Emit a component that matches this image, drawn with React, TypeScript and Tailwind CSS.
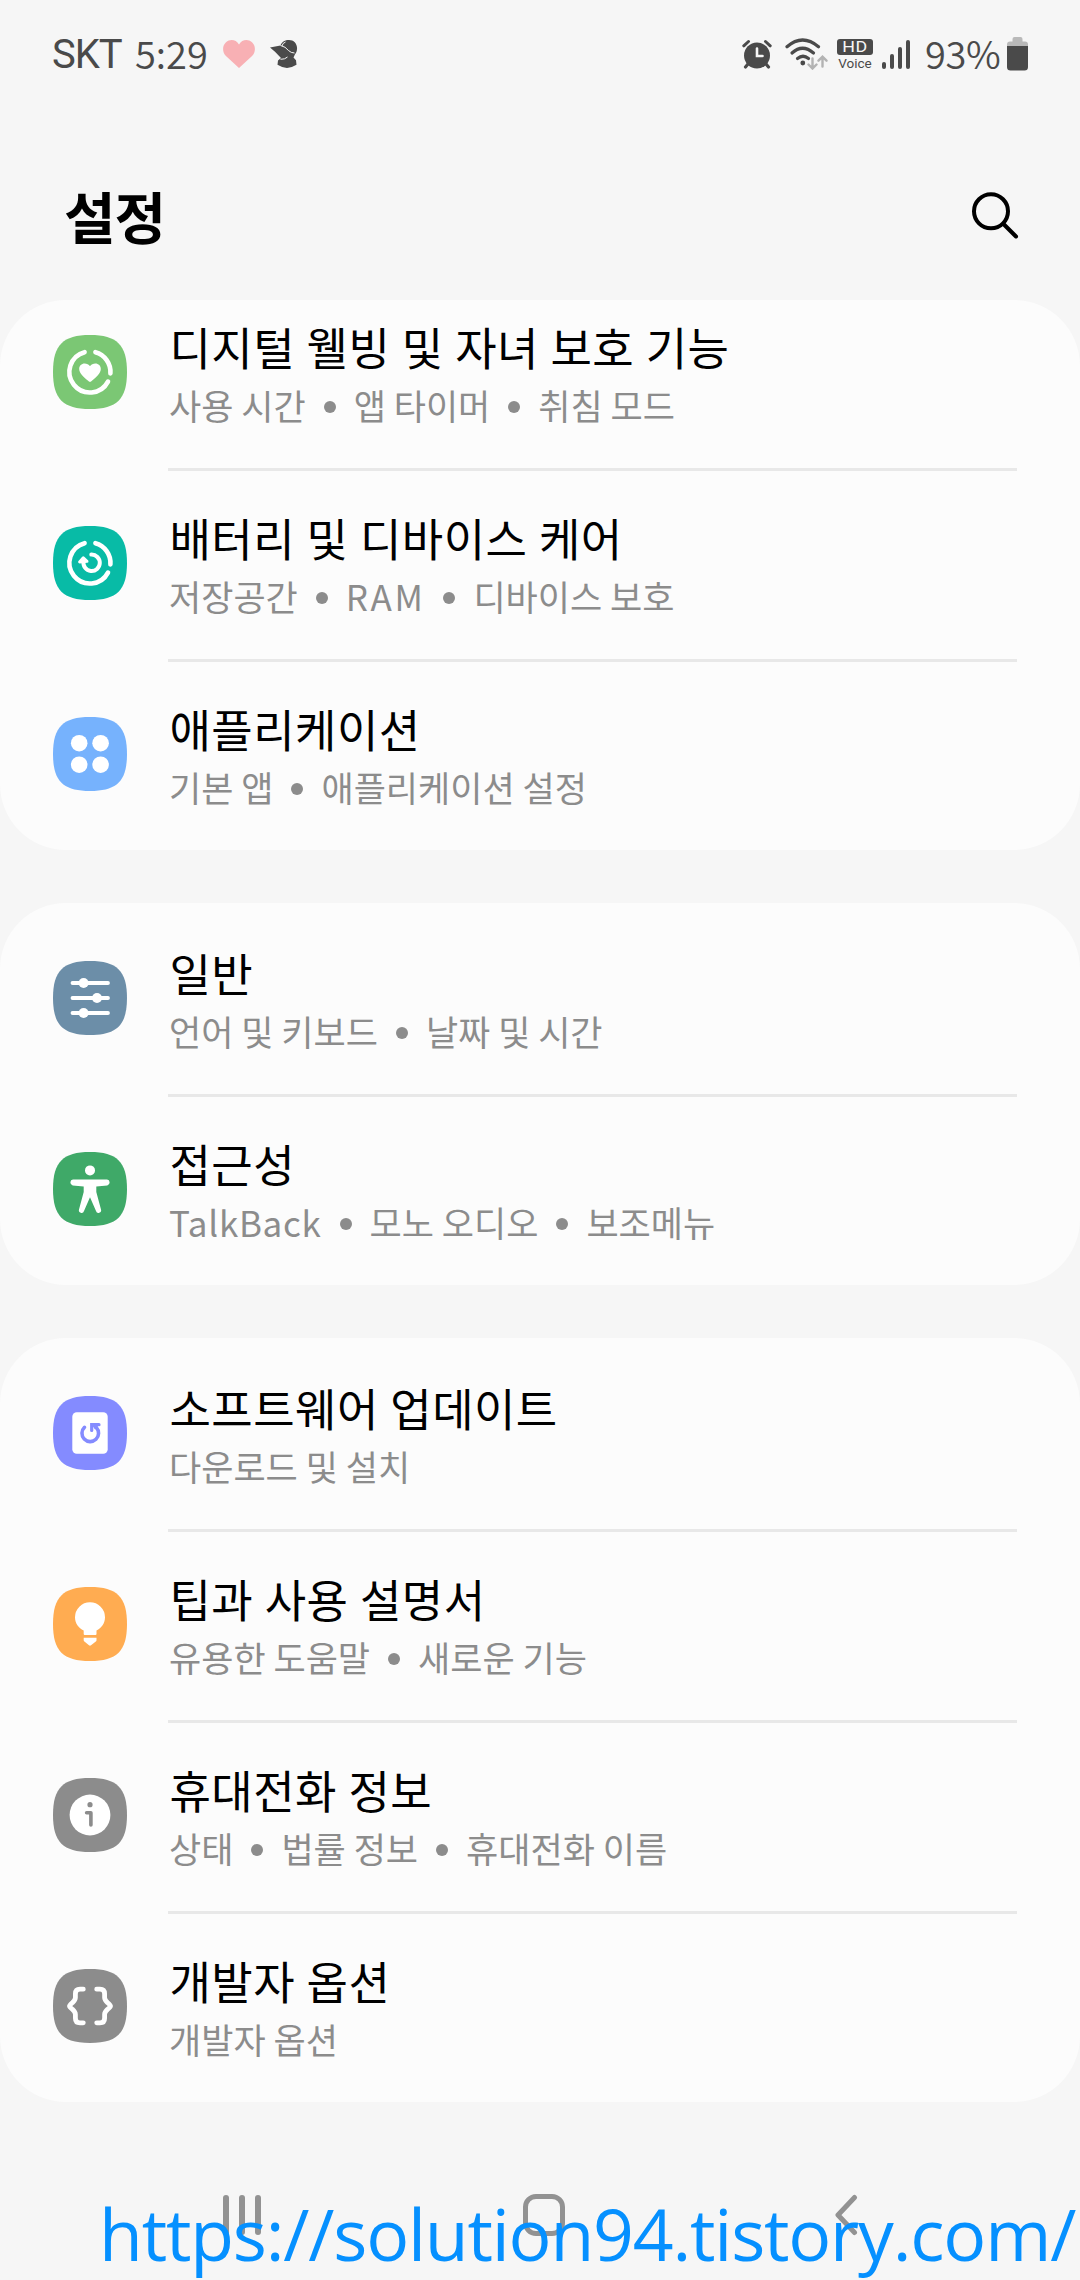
import type { ReactNode } from "react";

interface SettingItem {
  title: string;
  details: string[];
  color: string;
  icon: ReactNode;
}

const ringArcs = (
  <g fill="none" stroke="#fff" strokeWidth="4.6" strokeLinecap="round">
    <path d="M31.6 17.2A20.5 20.5 0 1 0 55 46.6" />
    <path d="M42.4 17.2A20.5 20.5 0 0 1 57.4 38.4" />
  </g>
);

const groups: SettingItem[][] = [
  [
    {
      title: "디지털 웰빙 및 자녀 보호 기능",
      details: ["사용 시간", "앱 타이머", "취침 모드"],
      color: "#7bc774",
      icon: (
        <>
          {ringArcs}
          <path d="M37 46.800c-.6 0-1-.4-1.600-.9-5-4.400-9.200-7.600-9.200-12 0-3.200 2.400-5.500 5.400-5.500 2.200 0 4.200 1 5.400 2.800 1.200-1.800 3.200-2.800 5.400-2.800 3 0 5.400 2.300 5.400 5.500 0 4.400-4.200 7.600-9.200 12-.6.500-1 .9-1.600.9Z" fill="#fff" />
        </>
      ),
    },
    {
      title: "배터리 및 디바이스 케어",
      details: ["저장공간", "RAM", "디바이스 보호"],
      color: "#08bba6",
      icon: (
        <>
          {ringArcs}
          <path d="M38.300 28.600A8.200 8.200 0 1 1 30.500 35.500" fill="none" stroke="#fff" strokeWidth="4" strokeLinecap="round" />
          <path d="M30.300 31.800 26.600 35.900 34 35.300Z" fill="#fff" stroke="#fff" strokeWidth="3" strokeLinejoin="round" />
        </>
      ),
    },
    {
      title: "애플리케이션",
      details: ["기본 앱", "애플리케이션 설정"],
      color: "#76b2fd",
      icon: (
        <g fill="#fff">
          <circle cx="26.200" cy="26.200" r="8.300" />
          <circle cx="47.600" cy="26.200" r="8.300" />
          <circle cx="26.200" cy="47.700" r="8.300" />
          <circle cx="47.600" cy="47.700" r="8.300" />
        </g>
      ),
    },
  ],
  [
    {
      title: "일반",
      details: ["언어 및 키보드", "날짜 및 시간"],
      color: "#6c8ea8",
      icon: (
        <>
          <path d="M19.500 22H55M19.500 37H55M19.500 52H55" stroke="#fff" strokeWidth="3.800" strokeLinecap="round" />
          <g fill="#fff">
            <circle cx="30.600" cy="22" r="5" />
            <circle cx="44" cy="37" r="5" />
            <circle cx="30.600" cy="52" r="5" />
          </g>
        </>
      ),
    },
    {
      title: "접근성",
      details: ["TalkBack", "모노 오디오", "보조메뉴"],
      color: "#3fa968",
      icon: (
        <g fill="#fff">
          <circle cx="37" cy="18.400" r="5" />
          <path d="M20 27.500H54a3 3 0 0 1 .3 5.900L43.300 34.600V40l4.700 17.600a2.600 2.600 0 0 1-5 1.500L37 45.200 31 59.100a2.600 2.600 0 0 1-5-1.500L30.700 40V34.600L19.700 33.400a3 3 0 0 1 .3-5.900Z" />
        </g>
      ),
    },
  ],
  [
    {
      title: "소프트웨어 업데이트",
      details: ["다운로드 및 설치"],
      color: "#848bff",
      icon: (
        <>
          <rect x="19.300" y="16.300" width="35.400" height="41.400" rx="4.500" fill="#fff" />
          <path d="M31.500 31.300A8.300 8.300 0 1 0 43.300 31.600" fill="none" stroke="#848bff" strokeWidth="3.600" strokeLinecap="round" />
          <path d="M38.700 34.500V28.700H46" fill="none" stroke="#848bff" strokeWidth="3.200" strokeLinecap="round" />
          <path d="M38.700 28.700H46L42 33.500Z" fill="#848bff" />
        </>
      ),
    },
    {
      title: "팁과 사용 설명서",
      details: ["유용한 도움말", "새로운 기능"],
      color: "#ffac51",
      icon: (
        <g fill="#fff">
          <path d="M37 15.300a15 15 0 0 0-15 15c0 6 3.500 10.700 8.700 13.300V47q0 1 1 1H42.500q1 0 1-1V43.600C48.500 41 52 36.300 52 30.300a15 15 0 0 0-15-15Z" />
          <path d="M30.700 50.700H43.500v2.600q0 .8-.7 1.300L38 58.300q-1 .8-2 0L31.400 54.600q-.7-.5-.7-1.300Z" />
        </g>
      ),
    },
    {
      title: "휴대전화 정보",
      details: ["상태", "법률 정보", "휴대전화 이름"],
      color: "#8c8c8c",
      icon: (
        <>
          <circle cx="37" cy="37" r="20.400" fill="#fff" />
          <circle cx="37" cy="26.700" r="2.600" fill="#8c8c8c" />
          <path d="M33.600 34.800H37.900V47" fill="none" stroke="#8c8c8c" strokeWidth="3.600" strokeLinecap="round" strokeLinejoin="round" />
        </>
      ),
    },
    {
      title: "개발자 옵션",
      details: ["개발자 옵션"],
      color: "#8c8c8c",
      icon: (
        <g fill="none" stroke="#fff" strokeWidth="4.800" strokeLinecap="round" strokeLinejoin="round">
          <path d="M30.300 20.200H27Q22.400 20.200 22.400 24.800V28.500Q22.400 31 19.500 33.600 16.500 36 16.500 37T19.500 40.400Q22.400 43 22.400 45.500V49.200Q22.400 53.800 27 53.800H30.300" />
          <path d="M43.700 20.200H47Q51.600 20.200 51.600 24.800V28.500Q51.600 31 54.500 33.600 57.500 36 57.500 37T54.500 40.400Q51.600 43 51.600 45.500V49.200Q51.600 53.800 47 53.800H43.700" />
        </g>
      ),
    },
  ],
];

// Latin words are set a little wider than the Hangul around them
const latinTracking: Record<string, string> = {
  RAM: "tracking-[2.6px]",
  TalkBack: "tracking-[.7px]",
};

function StatusBar() {
  return (
    <div className="flex h-[108px] items-start justify-between pl-[52px] pr-[52px] pt-[37px] text-[#4a4a4a]">
      <div className="flex h-[34px] items-center">
        <span className="mt-[2px] w-[83px] font-['Roboto',sans-serif] text-[40px] leading-[34px] tracking-[-1px]">SKT</span>
        <span className="-mt-[3px] w-[88px] text-[38px] leading-[34px] font-[350]">5:29</span>
        <svg className="h-[28px] w-[32px]" viewBox="0 0 32 28" fill="#f8b0b4">
          <path d="M16 28 3.200 16.300C-1 12.300-.8 5.500 3 2.200 7-1.200 13-.6 16 4.400 19-.6 25-1.200 29 2.200c3.800 3.300 4 10.100-.2 14.100Z" />
        </svg>
        <svg className="ml-[15px] h-[28px] w-[28px]" viewBox="0 0 28 28">
          <path d="M0 7.500 10.500 5.500C12 1.500 15 0 19 0c5 0 8.500 4 8 9-.2 2-.5 3.500-2 5.300L23.500 17.500l2.500 2.800.5 4.500Q17 31 7.500 24.800L8 20.500 11 18 5 11.700Z" fill="#4a4a4a" />
          <path d="M10.500 5.500Q15.500 6.500 18.500 10.500 21 13 24.500 13M17.500 17Q15 19.500 10.500 19.300M12 6Q12.500 3 15.500 2" fill="none" stroke="#f6f6f6" strokeWidth="1" />
        </svg>
      </div>

      <div className="flex h-[34px] items-center">
        <svg className="h-[30px] w-[30px]" viewBox="0 0 30 30" fill="none" stroke="#4a4a4a" strokeLinecap="round">
          <circle cx="15" cy="16.500" r="13" fill="#4a4a4a" stroke="none" />
          <path d="M1.800 6.800 6.500 2.500M28.200 6.800 23.500 2.500" strokeWidth="3" />
          <path d="M6 25 3.500 28M24 25 26.500 28" strokeWidth="3.200" />
          <path d="M15 9.500V17H20.500" stroke="#f6f6f6" strokeWidth="2.600" />
        </svg>
        <svg className="ml-[13px] h-[32px] w-[43px]" viewBox="0 0 43 32" fill="none" strokeLinecap="round">
          <g stroke="#4a4a4a" strokeWidth="3.200">
            <path d="M2 8.800Q17.500-4.800 33.500 8.800" />
            <path d="M7 15Q17.500 5.500 28.500 15" />
            <path d="M12.500 20.500Q18 16 23.500 20.500" />
          </g>
          <circle cx="17.800" cy="25" r="2.400" fill="#4a4a4a" />
          <path d="M27.500 20.500V30M23.500 26.500 27.500 30.500 31.500 26.500M37.500 28.500V19M33.500 22.700 37.500 18.700 41.500 22.700" stroke="#b3b3b3" strokeWidth="2.400" />
        </svg>
        <div className="ml-[9px] flex w-[36px] flex-col items-center font-['Roboto',sans-serif]">
          <span className="flex h-[16px] w-[36px] items-center justify-center rounded-[3px] bg-[#4a4a4a] text-[15.500px] leading-[16px] tracking-[.5px] text-[#f6f6f6]">
            <span className="inline-block scale-x-115">HD</span>
          </span>
          <span className="mt-[1px] text-[13.500px] leading-[14px]">Voice</span>
        </div>
        <div className="ml-[9px] flex h-[30px] items-end gap-[4px]">
          <i className="h-[7px] w-[4px] rounded-[2px] bg-[#4a4a4a]" />
          <i className="h-[15px] w-[4px] rounded-[2px] bg-[#4a4a4a]" />
          <i className="h-[22px] w-[4px] rounded-[2px] bg-[#4a4a4a]" />
          <i className="h-[29px] w-[4px] rounded-[2px] bg-[#4a4a4a]" />
        </div>
        <span className="-mt-[3px] ml-[15px] w-[82px] text-[38px] leading-[34px] font-[350] tracking-[-.3px]">93%</span>
        <svg className="h-[34px] w-[21px]" viewBox="0 0 21 34">
          <path d="M5.500 2Q5.500 0 7.500 0h6q2 0 2 2v2.500H18q3 0 3 3V10H0V7.500q0-3 3-3h2.500Z" fill="#b9b9b9" />
          <path d="M0 9H21V30q0 3.500-3.500 3.500h-14Q0 33.500 0 30Z" fill="#4a4a4a" />
        </svg>
      </div>
    </div>
  );
}

function SettingRow({ item, divided }: { item: SettingItem; divided: boolean }) {
  return (
    <li className="flex h-[191px] shrink-0 pl-[53px] pr-[63px]">
      <svg className="mt-[58px] mr-[41px] h-[74px] w-[74px] shrink-0" viewBox="0 0 74 74">
        <path d="M37 0C64 0 74 10 74 37S64 74 37 74 0 64 0 37 10 0 37 0Z" fill={item.color} />
        {item.icon}
      </svg>
      <div className="relative flex-1">
        {divided && <hr className="absolute inset-x-0 top-0 h-[3px] border-0 bg-[#e8e8e8]" />}
        <h2 className="mt-[43px] ml-[1.500px] h-[54px] whitespace-nowrap text-[45px] leading-[54px] tracking-[.45px] [word-spacing:1px] text-black">
          {item.title}
        </h2>
        <p className="mt-[9px] ml-[1px] flex h-[44px] items-center whitespace-nowrap text-[35px] leading-[44px] text-[#8c8c8c]">
          {item.details.map((detail, i) => (
            <span key={detail} className="flex items-center">
              {i > 0 && <span className="mt-[3px] mr-[18px] ml-[18px] h-[12px] w-[12px] rounded-full bg-[#8c8c8c]" />}
              <span className={latinTracking[detail]}>{detail}</span>
            </span>
          ))}
        </p>
      </div>
    </li>
  );
}

export default function App() {
  return (
    <div className="relative flex h-[2280px] w-[1080px] flex-col overflow-hidden bg-[#f6f6f6] font-['Noto_Sans_CJK_KR',sans-serif]">
      <StatusBar />

      <header className="flex h-[192px] items-start justify-between pl-[64px] pr-[60px]">
        <h1 className="mt-[69px] text-[56px] leading-[76px] font-bold tracking-[-1px] text-black">설정</h1>
        <svg className="mt-[82px] h-[50px] w-[50px]" viewBox="0 0 50 50" fill="none" stroke="#000" strokeWidth="4" strokeLinecap="round">
          <circle cx="21" cy="21.300" r="17" />
          <path d="M33.500 34 46 46.500" />
        </svg>
      </header>

      <main className="flex flex-col gap-[53px]">
        {groups.map((items, g) => (
          // the first group is scrolled partly under the header
          <ul
            key={items[0].title}
            className={`flex flex-col justify-end overflow-hidden rounded-[66px] bg-[#fcfcfc] ${g === 0 ? "h-[550px]" : ""}`}
          >
            {items.map((item, i) => (
              <SettingRow key={item.title} item={item} divided={i > 0} />
            ))}
          </ul>
        ))}
      </main>

      <nav className="mt-[92px] flex h-[42px] items-center pl-[223px]">
        <div className="flex h-[40px] w-[38px] justify-between">
          <i className="w-[6px] rounded-full bg-[#929292]" />
          <i className="w-[6px] rounded-full bg-[#929292]" />
          <i className="w-[6px] rounded-full bg-[#929292]" />
        </div>
        <div className="ml-[262px] h-[42px] w-[42px] rounded-[13px] border-[5px] border-[#929292]" />
        <svg className="ml-[269px] h-[42px] w-[24px]" viewBox="0 0 24 42" fill="none" stroke="#929292" strokeWidth="5" strokeLinecap="round" strokeLinejoin="round">
          <path d="M20.500 3.500 4 21 20.500 38.500" />
        </svg>
      </nav>

      <p className="absolute top-[2188px] left-[99px] whitespace-nowrap font-['Open_Sans',sans-serif] text-[71.500px] leading-[91px] tracking-[-1.200px] text-[#0590ff]">
        https://solution94.tistory.com/
      </p>
    </div>
  );
}
